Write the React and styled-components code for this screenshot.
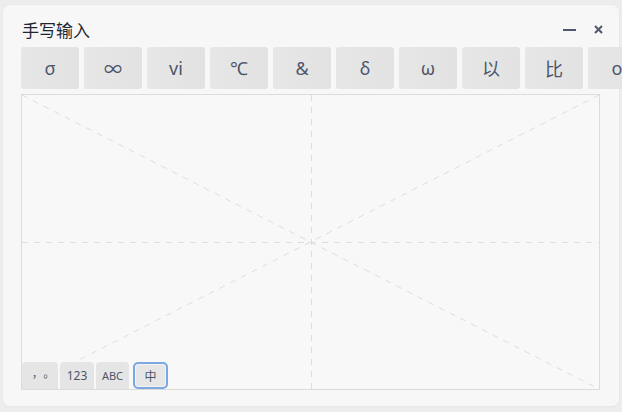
import React from "react";
import styled, { createGlobalStyle } from "styled-components";

const Global = createGlobalStyle`
  html, body { margin: 0; padding: 0; background: #ededed; overflow: hidden; }
  body { font-family: "Noto Sans", "Noto Sans CJK SC", sans-serif; }
`;

const Page = styled.div`
  width: 622px;
  height: 412px;
  padding: 5px 3px 6px 3px;
  box-sizing: border-box;
`;

const Panel = styled.div`
  width: 100%;
  height: 100%;
  box-sizing: border-box;
  background: #f7f7f7;
  border-radius: 7px;
  box-shadow: 0 0 0 1px #e9e9e9, 0 1px 2px rgba(0,0,0,0.05);
  padding: 11px 0 0 18px;
  display: flex;
  flex-direction: column;
`;

const TitleBar = styled.div`
  display: flex;
  align-items: center;
  height: 27px;
  padding-right: 16px;
`;

const Title = styled.div`
  flex: 1;
  font-family: "Noto Sans CJK SC", sans-serif;
  font-size: 17px;
  color: #1e2833;
  padding-left: 1px;
`;

const Ctrl = styled.button`
  border: none;
  background: none;
  padding: 0;
  margin-left: ${p => p.$ml || 0}px;
  display: flex;
  align-items: center;
  justify-content: center;
  width: ${p => p.$w}px;
  height: 14px;
`;

const Candidates = styled.div`
  display: flex;
  gap: 5px;
  margin-top: 4px;
`;

const Cand = styled.div`
  flex: 0 0 58px;
  height: 42px;
  border-radius: 3px;
  background: linear-gradient(90deg, #e7e7e7, #e2e2e2);
  display: flex;
  align-items: center;
  justify-content: center;
  font-family: "Noto Sans", "Noto Sans CJK SC", sans-serif;
  font-size: 18px;
  color: #4c566a;
`;

const Canvas = styled.div`
  position: relative;
  margin-top: 5px;
  width: 579px;
  height: 296px;
  box-sizing: border-box;
  border: 1px solid #dcdcdc;
  background: #f8f8f8;
`;

const Guides = styled.svg`
  position: absolute;
  inset: 0;
  width: 100%;
  height: 100%;
`;

const Modes = styled.div`
  position: absolute;
  left: 0;
  bottom: 0;
  display: flex;
  gap: 2px;
`;

const Mode = styled.div`
  width: ${p => p.$w}px;
  height: 27px;
  box-sizing: border-box;
  border-radius: 4px 4px 0 0;
  background: #e5e5e5;
  display: flex;
  align-items: center;
  justify-content: center;
  font-family: ${p => p.$tc ? '"Noto Sans CJK TC"' : '"Noto Sans", "Noto Sans CJK SC"'}, sans-serif;
  font-size: ${p => p.$fs || 11}px;
  color: #4c566a;
  margin-left: ${p => p.$ml || 0}px;
  ${p => p.$active && `
    border: 2px solid #7ba7e3;
    border-radius: 5px;
    background: #e6e6e6;
    box-shadow: inset 0 0 0 1px #f4f4f4;
  `}
`;

const cands = ["σ", "∞", "vi", "℃", "&", "δ", "ω", "以", "比", "o"];

export default function App() {
  return (
    <Page>
      <Global />
      <Panel>
        <TitleBar>
          <Title>手写输入</Title>
          <Ctrl $w={14} aria-label="minimize">
            <svg width="14" height="4" viewBox="0 0 14 4">
              <rect x="0" y="1" width="13" height="2" fill="#4f596c" />
            </svg>
          </Ctrl>
          <Ctrl $w={10} $ml={16} aria-label="close">
            <svg width="9" height="9" viewBox="0 0 9 9">
              <path d="M1 1 L8 8 M8 1 L1 8" stroke="#4f596c" strokeWidth="2" />
            </svg>
          </Ctrl>
        </TitleBar>
        <Candidates>
          {cands.map((c, i) => (
            <Cand key={i}>{c}</Cand>
          ))}
        </Candidates>
        <Canvas>
          <Guides viewBox="0 0 577 294" preserveAspectRatio="none">
            <g stroke="#dedede" strokeWidth="1" strokeDasharray="6 6" fill="none">
              <line x1="289.5" y1="0" x2="289.5" y2="294" />
              <line x1="0" y1="147.5" x2="577" y2="147.5" />
              <line x1="0" y1="0" x2="577" y2="294" />
              <line x1="577" y1="0" x2="0" y2="294" />
            </g>
          </Guides>
          <Modes>
            <Mode $w={36} $fs={11} $tc>，。</Mode>
            <Mode $w={34} $fs={12}>123</Mode>
            <Mode $w={33} $fs={11}>ABC</Mode>
            <Mode $w={35} $fs={12} $ml={2} $active>中</Mode>
          </Modes>
        </Canvas>
      </Panel>
    </Page>
  );
}
